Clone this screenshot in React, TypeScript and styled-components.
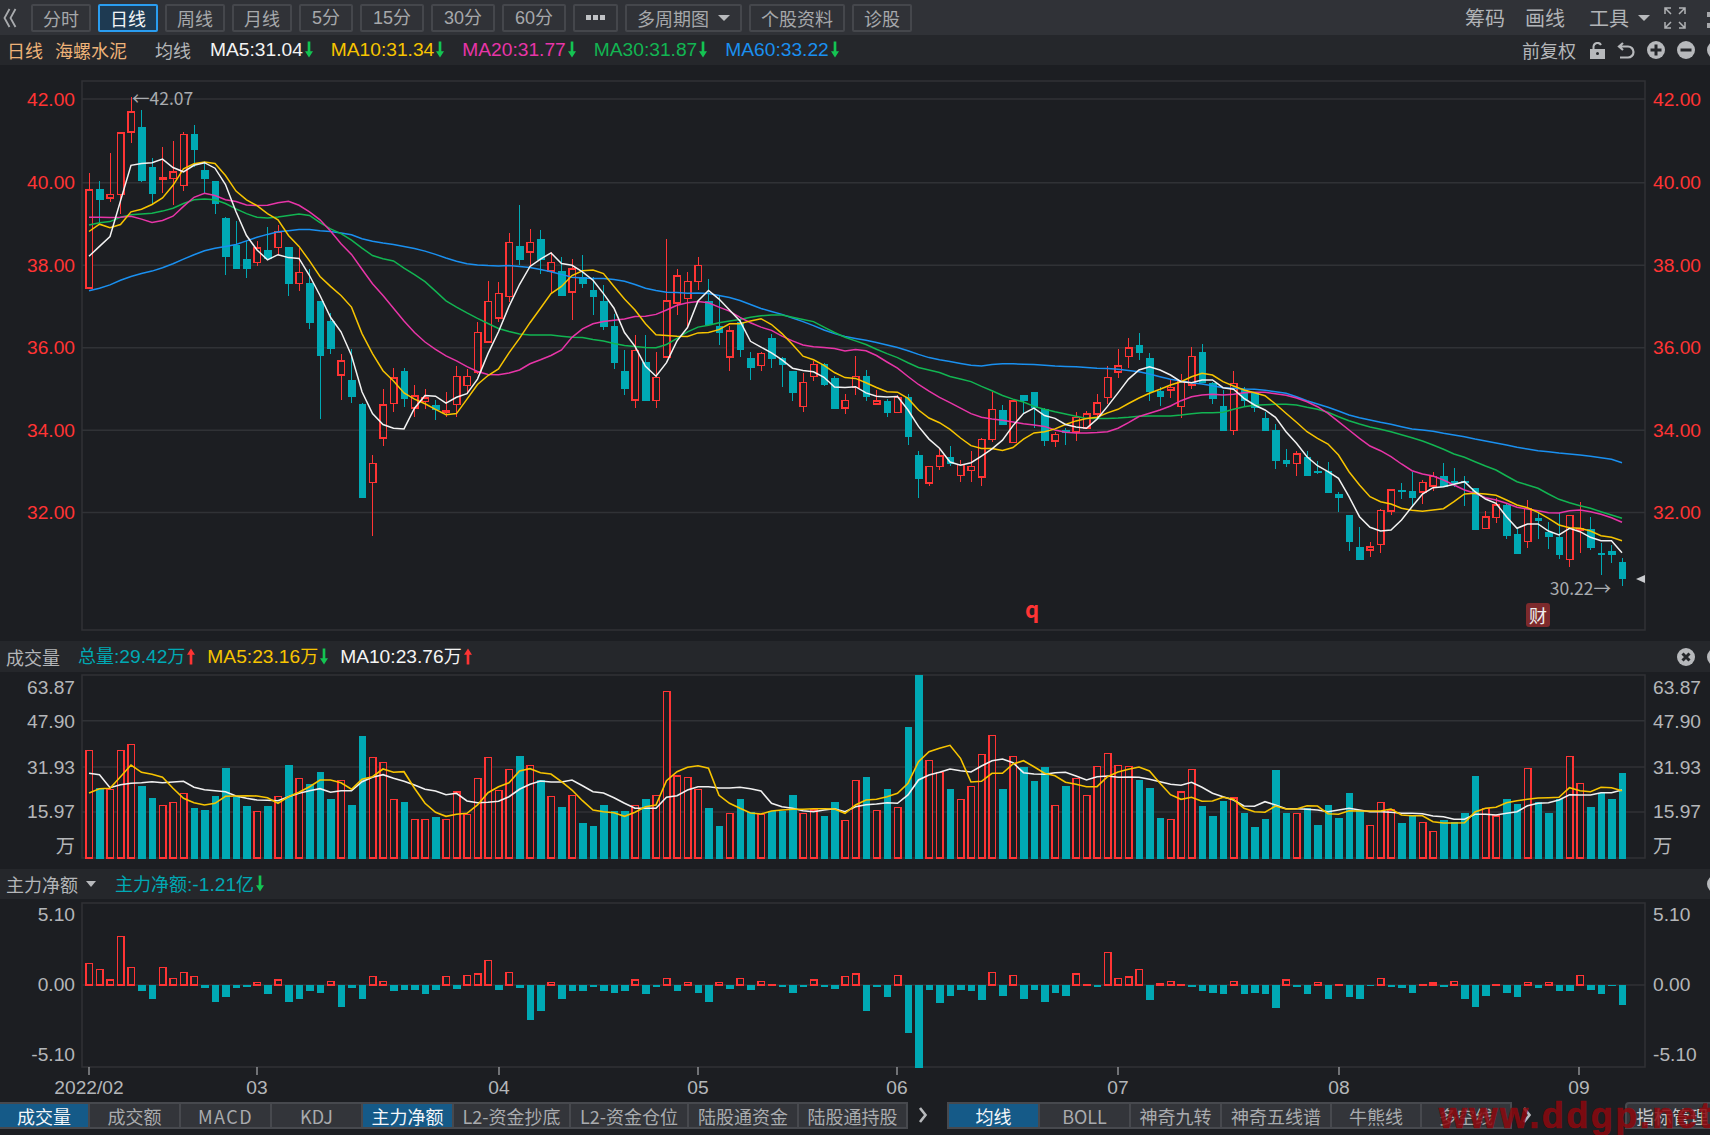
import React from "react"
import styled, { createGlobalStyle } from "styled-components"

const RED = "#ff3434"
const TEAL = "#00a9b4"
const BG = "#1c1e22"
const GRID = "#303236"
const YELLOW = "#f7c400"
const PINK = "#e835a8"
const GREEN = "#12b552"
const BLUE = "#1a90f0"
const LABEL = "#b4b6b9"
const LATIN = `"Liberation Sans", "Noto Sans CJK SC", sans-serif`

const STEP = 10.5
const xAt = (i: number) => 89 + STEP * i

// candles: kind high,top,bottom,low, read off the chart in three stretches
const CANDLES_A = `r283,330,600,600 t305,328,357,420 r227,342,352,362 r170,173,343,395 r73,116,170,200 t110,156,305,308 t243,267,341,370 r212,297,298,337 r196,281,298,370 r170,177,318,332 t152,177,220,268 t250,275,300,340 t305,305,369,395 t403,407,513,563 t415,480,546,546 t470,519,546,571 r470,490,529,538 t433,494,519,519 r425,445,488,510 t486,486,588,621 r490,557,587,608 t547,585,695,711 t634,634,786,960 t668,691,766,782 r782,800,839,907 t767,853,898,915 t915,919,1178,1178 r1060,1082,1135,1282 r878,921,1012,1033 r820,847,917,940 t820,828,906,926 r866,896,930,955 r878,902,911,932 t908,920,935,963 r886,937,940,955 r815,843,920,955 r823,843,868,890 r692,722,831,835 r580,636,748,752 r584,615,682,692 r449,475,623,637 t370,485,522,535 r437,475,500,540 t440,466,522,560 r500,530,553,615 t515,552,621,621 r519,547,611,687 t510,570,588,600 t568,605,625,675 t590,635,708,716 t672,704,807,823 t770,829,877,893 r730,771,908,930 t730,803,910,910 r775,846,909,930 r465,635,789,789 r548,566,641,675 r556,582,628,710 r515,537,582,605 t576,635,701,703 t622,705,723,757 r705,718,789,827 t680,692,769,790 t775,792,819,852 r776,780,813,827 t725,738,795,820 t790,792,811,873 t827,828,889,910 r832,859,925,940 r800,810,843,856 t807,808,865,868 t842,846,931,931 r890,909,930,947 r787,843,873,895 t824,841,898,910 r880,910,918,922 t906,911,943,955 r895,900,942,942 t890,898,1008,1030 t1047,1060,1125,1178 r1088,1090,1136,1145 r1040,1061,1090,1100 t1035,1063,1084,1090 r1072,1085,1115,1132 r1047,1090,1102,1132 r1012,1016,1119,1145 r885,933,1016,1024 t920,936,976,976 r908,910,1024,1024 t895,895,911,945 t886,886,930,985 t930,933,1021,1033 r995,1003,1020,1038 t985,990,997,1032 r940,955,995,1020 r937,946,985,985 r890,916,946,955 r815,846,900,918 r767,814,830,848 r737,764,788,820`
const CANDLES_B = `t8,45,70,90 t70,83,185,212 t170,183,200,228 r150,173,180,205 r133,155,230,263 r52,80,165,176 t43,65,158,160 t155,160,208,222 t180,227,302,302 r124,160,302,316 t172,180,212,228 t185,190,235,245 t245,263,302,302 t282,300,392,416 t357,390,401,410 r362,372,401,437 t362,380,437,437 t393,424,428,432 t397,422,488,490 t485,492,505,545 t555,555,635,662 t592,650,689,689 r636,651,660,680 r538,542,643,670 r476,480,543,555 t460,479,486,506 t425,484,505,530 r450,458,486,523 r425,440,468,483 t398,438,470,470 t415,452,462,470 t438,452,458,528 t475,475,599,599 r542,561,595,595 r505,525,562,578 t520,525,618,626 t596,613,671,671 r510,535,634,653 t545,565,572,627 t577,605,622,658 t550,622,676,688 r555,557,688,712 r515,595,600,670 t560,596,653,660 t640,668,676,735 t645,664,676,698 t685,695,748,767`

const parseCandles = (raw: string, toY: (v: number) => number) =>
  raw.split(" ").map((item) => {
    const [high, top, bottom, low] = item.slice(1).split(",").map((v) => toY(Number(v)))
    return { up: item[0] === "r", high, top, bottom, low }
  })

const fromWide = (v: number) => 70 + v / 2.75
const fromTall = (v: number) => 330 + v / 3

const candles = [...parseCandles(CANDLES_A, fromWide), ...parseCandles(CANDLES_B, fromTall)]

const maLine = (a: number[], b: number[], c: number[]) =>
  [...a.map(fromWide), ...b.map(fromWide), ...c.map(fromTall)]
    .map((y, i) => `${xAt(i)},${y.toFixed(1)}`)
    .join(" ")

const MA_LINES = [
  {
    color: BLUE,
    points: maLine(
      [607,600,591,578,568,560,553,544,533,520,508,497,490,485,480,470,460,452,445,442,439,439,442,444,448,453,464,471,476,480,485,491,498,507,517,526,533,536,538,539,538,540,543,549,555,562,570],
      [572,573,573,576,581,590,600,606,611,612,614,613,615,620,626,634,645,656,664,672,682,692,703,715,725,733,738,743,749,756,763,772,782,791,797,802,807,812,814,810,808,808,809,810,812,814,815,816,818,820,821,823,826,830],
      [132,140,148,153,158,162,167,173,175,177,178,181,185,190,200,212,222,232,243,255,263,270,277,283,290,297,300,304,310,315,320,327,333,339,345,352,357,362,365,369,372,375,379,383,388,398],
    ),
  },
  {
    color: GREEN,
    points: maLine(
      [426,420,417,405,398,396,394,388,380,367,357,355,357,367,382,395,405,407,404,400,396,400,420,437,450,468,490,510,519,525,545,563,582,608,635,652,668,683,697,711,719,726,729,729,729,732,735],
      [736,741,745,752,758,760,763,764,755,738,720,707,702,695,690,686,680,676,674,674,680,686,692,707,722,735,745,755,768,780,791,805,818,825,832,843,850,857,870,882,895,905,913,925,933,940,946,952,958,958,958,957,955,952],
      [258,258,258,255,251,248,248,247,238,230,226,224,223,223,225,232,238,247,260,272,282,291,298,305,314,323,333,345,358,372,382,395,408,420,438,455,465,475,492,508,518,527,535,545,555,565],
    ),
  },
  {
    color: PINK,
    points: maLine(
      [405,405,406,405,402,410,419,414,402,375,350,339,345,357,362,371,373,372,365,361,372,390,412,443,478,507,548,588,620,655,690,722,748,768,786,800,816,829,837,838,833,825,808,797,785,770,735],
      [712,698,692,688,685,678,677,672,660,647,640,637,640,652,663,680,695,707,716,732,745,756,761,763,766,773,769,772,785,803,820,843,865,883,900,915,930,945,955,960,963,968,973,976,980,990,996,998,998,997,995,985,970,953],
      [250,240,228,212,200,195,193,195,193,188,187,187,191,196,204,215,230,250,275,300,325,348,362,380,402,422,432,438,450,465,480,490,503,510,520,532,537,542,548,549,542,540,545,553,563,577],
    ),
  },
  {
    color: YELLOW,
    points: maLine(
      [444,424,434,425,390,383,370,352,317,272,258,253,257,290,333,357,373,395,412,455,485,525,568,595,620,652,725,780,827,855,888,905,918,933,948,945,905,865,840,822,778,738,695,655,615,595,565],
      [552,550,560,595,630,660,698,728,730,732,733,723,722,714,698,698,690,684,700,725,755,787,797,812,832,846,848,860,873,885,886,903,935,957,970,988,1012,1033,1041,1041,1046,1038,1015,998,995,987,975,965,958,955,943,933,917,902],
      [190,178,165,155,140,130,135,155,168,180,188,197,222,250,277,305,325,342,375,425,465,500,515,522,535,541,544,540,536,515,492,490,492,496,510,525,533,547,565,585,593,595,603,617,622,632],
    ),
  },
  {
    color: "#f2f2f2",
    points: maLine(
      [512,485,458,360,262,257,255,245,268,280,262,255,270,315,390,455,495,522,508,516,518,565,620,680,720,785,885,945,975,985,987,930,895,897,916,900,890,850,780,720,650,590,540,520,503,532,537],
      [555,578,615,655,722,760,815,842,805,745,708,635,606,630,660,690,746,762,778,797,820,826,830,845,872,873,871,888,897,899,898,935,980,1015,1040,1078,1087,1080,1062,1042,1018,978,945,930,950,958,975,982,985,960,925,888,850,825],
      [110,120,135,155,158,150,150,173,178,205,225,240,262,305,340,380,407,425,445,500,560,592,603,600,570,530,492,473,470,463,455,485,507,520,560,595,582,582,603,615,595,605,622,632,632,668],
    ),
  },
]

const VOLUME = `r331 t443 r448 r331 r313 t438 t474 r497 r488 r461 t505 t510 t469 t384 t470 t497 r515 t497 r470 t375 r415 t433 t397 t478 r421 t496 t289 r352 r367 r479 t487 r538 r538 t532 r538 r456 r524 r416 r353 r452 r389 t348 r376 t420 r470 t501 r466 t550 t559 t496 t514 t514 r497 t478 r466 r155 r408 r412 r448 t505 t559 r520 t478 t517 r524 t514 t514 t465 r520 r510 t528 t487 r542 r421 t411 r511 t447 r502 t262 t105 r362 r398 t447 r479 r439 r344 r286 t447 r349 t380 t424 t380 r497 t438 r416 r466 r380 r340 r376 r380 t420 t443 t533 r538 r456 r389 t497 t528 t483 r474 t519 t560 t537 t389 t519 r520 t505 t555 t496 t533 t460 t510 r556 r488 r510 t550 t528 r547 r574 t541 t546 t519 t407 r506 r528 t478 t492 r385 t487 t519 t478 r349 r430 t501 t460 t478 t398`
  .split(" ")
  .map((v) => ({ up: v[0] === "r", top: 640 + Number(v.slice(1)) / 3 }))

const volLine = (ys: number[]) => ys.map((y, i) => `${xAt(i)},${(640 + y / 3).toFixed(1)}`).join(" ")

const VOL_MA5 = volLine([459,446,445,410,375,397,403,412,445,475,488,495,490,469,468,467,468,473,490,470,457,440,420,420,428,448,418,410,387,397,395,445,490,517,529,523,520,495,458,440,428,393,386,398,402,425,450,482,510,515,518,529,517,500,495,422,395,382,377,385,466,490,505,519,522,513,510,508,508,506,506,507,520,495,480,478,470,460,430,365,335,325,316,355,426,424,400,400,372,362,380,400,407,427,433,440,440,410,396,388,381,393,430,464,478,472,484,483,472,478,505,515,517,498,507,507,497,498,521,523,512,513,513,513,507,525,527,527,545,549,549,548,516,505,502,488,482,478,474,473,472,443,452,455,442,443,452])
const VOL_MA10 = volLine([400,404,443,434,430,428,425,428,426,424,442,449,452,455,468,475,480,481,482,470,460,452,446,457,452,452,425,412,404,415,424,435,448,453,464,460,483,488,487,484,470,448,433,423,426,426,420,437,455,459,473,490,505,505,505,472,467,450,440,440,444,444,442,446,453,490,500,505,512,515,510,506,515,500,494,492,488,490,465,420,405,397,387,392,396,378,362,357,368,398,402,403,398,397,408,420,410,408,412,411,412,418,425,433,436,427,442,460,470,480,498,499,485,495,506,506,508,510,515,510,505,510,515,515,517,520,520,521,528,530,538,538,523,523,525,520,515,497,490,488,480,464,465,465,458,458,450])

const NET = `r250 r268 r300 r170 r263 t333 t356 r263 r295 r278 r290 t325 t365 t352 t325 t320 r308 t343 r300 t365 t356 t334 t338 r304 t380 t325 t356 r290 r304 t334 t329 t329 t343 t329 r290 t326 r286 r282 r242 t329 r278 t325 t419 t393 r308 t356 t334 t334 t320 t334 t338 t334 r300 t343 t320 r295 t334 r308 t338 t365 r308 t326 r296 t329 r304 r313 t320 t338 t320 r300 t320 t326 r290 r282 t393 t320 t352 r287 t460 t563 t329 t370 t347 t329 t333 t361 r277 t347 r287 t356 t329 t365 t338 t347 r282 r313 t320 r218 r295 r291 r268 t361 r310 r304 r313 t320 t334 t338 t343 r304 t343 t338 t343 t383 r300 t320 t343 r308 t356 r313 t352 t356 t317 r296 t322 t325 t338 r313 r309 t320 r304 t356 t380 t347 r313 t338 t352 r308 t325 r308 t334 t334 r287 t329 t343 t317 t374`
  .split(" ")
  .map((v) => ({ up: v[0] === "r", edge: 880 + Number(v.slice(1)) / 3 }))

const PRICE_TICKS = [
  { label: "42.00", y: 99 },
  { label: "40.00", y: 182.7 },
  { label: "38.00", y: 265.3 },
  { label: "36.00", y: 347.7 },
  { label: "34.00", y: 430.2 },
  { label: "32.00", y: 512.6 },
]
const VOL_TICKS = [
  { label: "63.87", y: 687 },
  { label: "47.90", y: 721 },
  { label: "31.93", y: 767 },
  { label: "15.97", y: 811.5 },
  { label: "万", y: 846 },
]
const NET_TICKS = [
  { label: "5.10", y: 914 },
  { label: "0.00", y: 984.5 },
  { label: "-5.10", y: 1054.5 },
]
const MONTHS = [
  { label: "2022/02", x: 89 },
  { label: "03", x: 257 },
  { label: "04", x: 499 },
  { label: "05", x: 698 },
  { label: "06", x: 897 },
  { label: "07", x: 1118 },
  { label: "08", x: 1339 },
  { label: "09", x: 1579 },
]

const PERIODS = ["分时", "日线", "周线", "月线", "5分", "15分", "30分", "60分"]
const LOWER_TABS = [
  { label: "成交量", w: 90, active: true },
  { label: "成交额", w: 91 },
  { label: "MACD", w: 91, wide: true },
  { label: "KDJ", w: 91 },
  { label: "主力净额", w: 91, active: true },
  { label: "L2-资金抄底", w: 117 },
  { label: "L2-资金仓位", w: 118 },
  { label: "陆股通资金", w: 110 },
  { label: "陆股通持股", w: 107 },
]
const OVERLAY_TABS = [
  { label: "均线", w: 91, active: true },
  { label: "BOLL", w: 91 },
  { label: "神奇九转", w: 91 },
  { label: "神奇五线谱", w: 110 },
  { label: "牛熊线", w: 90 },
  { label: "多空线", w: 88 },
]
const MA_LEGEND = [
  { label: "MA5:31.04", color: "#f4f4f4" },
  { label: "MA10:31.34", color: YELLOW },
  { label: "MA20:31.77", color: PINK },
  { label: "MA30:31.87", color: GREEN },
  { label: "MA60:33.22", color: BLUE },
]

const Trend = ({ up }: { up?: boolean }) => (
  <TrendSvg viewBox="0 0 9 18">
    {up ? <path d="M4.5 0 L9 7 H6 V18 H3 V7 H0 Z" fill={RED} /> : <path d="M4.5 18 L9 11 H6 V0 H3 V11 H0 Z" fill="#14c452" />}
  </TrendSvg>
)

const RoundIcon = ({ minus, cross }: { minus?: boolean; cross?: boolean }) => (
  <IconSvg width="18" height="18" viewBox="0 0 18 18">
    <circle cx="9" cy="9" r="9" fill="#b7b9bc" />
    {cross ? (
      <path d="M5.5 5.5 L12.5 12.5 M12.5 5.5 L5.5 12.5" stroke="#25272b" strokeWidth="3" />
    ) : (
      <path d={minus ? "M3.5 9 H14.5" : "M3.5 9 H14.5 M9 3.5 V14.5"} stroke="#25272b" strokeWidth="3" />
    )}
  </IconSvg>
)

const Candles = () => (
  <g shapeRendering="crispEdges">
    {candles.map((c, i) => {
      const x = xAt(i)
      const color = c.up ? RED : TEAL
      return (
        <g key={i}>
          <line x1={x} x2={x} y1={c.high} y2={c.low} stroke={color} strokeWidth="1" />
          {c.up ? (
            <rect x={x - 3} y={c.top} width="6.5" height={Math.max(c.bottom - c.top, 1)} fill={BG} stroke={color} strokeWidth="1.5" />
          ) : (
            <rect x={x - 3.5} y={c.top} width="7.5" height={Math.max(c.bottom - c.top, 1)} fill={color} />
          )}
        </g>
      )
    })}
  </g>
)

const AxisLabels = ({ ticks, color }: { ticks: { label: string; y: number }[]; color: string }) => (
  <>
    {ticks.map((t) => (
      <React.Fragment key={t.label}>
        <AxisText x="75" y={t.y} textAnchor="end" dominantBaseline="central" fill={color}>
          {t.label}
        </AxisText>
        <AxisText x="1653" y={t.y} dominantBaseline="central" fill={color}>
          {t.label}
        </AxisText>
      </React.Fragment>
    ))}
  </>
)

const PriceChart = () => (
  <ChartSvg width="1710" height="576" viewBox="0 65 1710 576">
    <rect x="82" y="81" width="1563" height="549" fill="none" stroke={GRID} strokeWidth="1.5" />
    {PRICE_TICKS.map((t) => (
      <line key={t.y} x1="82" x2="1645" y1={t.y} y2={t.y} stroke={GRID} strokeWidth="1.5" />
    ))}
    <AxisLabels ticks={PRICE_TICKS} color={RED} />
    <Candles />
    {MA_LINES.map((m) => (
      <polyline key={m.color} points={m.points} fill="none" stroke={m.color} strokeWidth="1.5" />
    ))}
    <MarkText x="132" y="97" dominantBaseline="central">←42.07</MarkText>
    <MarkText x="1611" y="587" textAnchor="end" dominantBaseline="central">30.22→</MarkText>
    <path d="M1636 579 L1645 575 V583 Z" fill="#c9cbce" />
    <EventMark x="1032" y="608" textAnchor="middle" dominantBaseline="central">q</EventMark>
    <rect x="1526" y="603" width="24" height="24" rx="3" fill="#7d2a2c" />
    <BadgeText x="1538" y="615" textAnchor="middle" dominantBaseline="central">财</BadgeText>
  </ChartSvg>
)

const VolumeChart = () => (
  <ChartSvg width="1710" height="197" viewBox="0 672 1710 197">
    <rect x="82" y="675" width="1563" height="183" fill="none" stroke={GRID} strokeWidth="1.5" />
    {[720.7, 767, 812].map((y) => (
      <line key={y} x1="82" x2="1645" y1={y} y2={y} stroke={GRID} strokeWidth="1.5" />
    ))}
    <AxisLabels ticks={VOL_TICKS} color={LABEL} />
    <g shapeRendering="crispEdges">
      {VOLUME.map((v, i) =>
        v.up ? (
          <rect key={i} x={xAt(i) - 3} y={v.top} width="6.5" height={858 - v.top} fill={BG} stroke={RED} strokeWidth="1.5" />
        ) : (
          <rect key={i} x={xAt(i) - 3.5} y={v.top} width="7.5" height={858.5 - v.top} fill={TEAL} />
        ),
      )}
    </g>
    <polyline points={VOL_MA10} fill="none" stroke="#f0f0f0" strokeWidth="1.6" />
    <polyline points={VOL_MA5} fill="none" stroke={YELLOW} strokeWidth="1.6" />
  </ChartSvg>
)

const NetChart = () => (
  <ChartSvg width="1710" height="203" viewBox="0 899 1710 203">
    <rect x="82" y="903" width="1563" height="164" fill="none" stroke={GRID} strokeWidth="1.5" />
    <line x1="82" x2="1645" y1="985" y2="985" stroke={GRID} strokeWidth="1.5" />
    <AxisLabels ticks={NET_TICKS} color={LABEL} />
    <g shapeRendering="crispEdges">
      {NET.map((n, i) =>
        n.up ? (
          <rect key={i} x={xAt(i) - 3} y={n.edge} width="6.5" height={985 - n.edge} fill={BG} stroke={RED} strokeWidth="1.5" />
        ) : (
          <rect key={i} x={xAt(i) - 3.5} y="985" width="7.5" height={n.edge - 985} fill={TEAL} />
        ),
      )}
    </g>
    {MONTHS.map((m) => (
      <g key={m.label}>
        <line x1={m.x} x2={m.x} y1="1067" y2="1075" stroke="#c4c6c9" strokeWidth="1" />
        <AxisText x={m.x} y="1087" textAnchor="middle" dominantBaseline="central" fill={LABEL}>
          {m.label}
        </AxisText>
      </g>
    ))}
  </ChartSvg>
)

export default function App() {
  return (
    <>
      <GlobalStyle />
      <Page>
        <Toolbar>
          <BackIcon viewBox="0 0 14 20" width="14" height="20">
            <path d="M6.5 1 L1.5 10 L6.5 19 M12.5 1 L7.5 10 L12.5 19" fill="none" stroke="#a9abae" strokeWidth="1.8" />
          </BackIcon>
          {PERIODS.map((p) => (
            <ToolButton key={p} $active={p === "日线"} $numeric={/\d/.test(p)}>
              {p}
            </ToolButton>
          ))}
          <ToolButton $numeric>
            <DotRow>
              <i />
              <i />
              <i />
            </DotRow>
          </ToolButton>
          <ToolButton>
            多周期图
            <Caret />
          </ToolButton>
          <ToolButton>个股资料</ToolButton>
          <ToolButton>诊股</ToolButton>
          <ToolRight>
            <ToolLink>筹码</ToolLink>
            <ToolLink>画线</ToolLink>
            <ToolLink $gap={24}>工具</ToolLink>
            <Caret />
            <ExpandIcon viewBox="0 0 22 22" width="22" height="22">
              <path
                d="M1 7 V1 H7 M1 1 L7 7 M15 1 H21 V7 M21 1 L15 7 M1 15 V21 H7 M1 21 L7 15 M21 15 V21 H15 M21 21 L15 15"
                fill="none"
                stroke="#b0b2b5"
                strokeWidth="1.5"
              />
            </ExpandIcon>
            <EdgeSlice $top={5}>
              <DotColumn>
                <i />
                <i />
              </DotColumn>
            </EdgeSlice>
          </ToolRight>
        </Toolbar>

        <InfoBar>
          <Ticker>日线</Ticker>
          <Ticker $gap={12}>海螺水泥</Ticker>
          <PaneText $gap={28}>均线</PaneText>
          <LegendRow>
            {MA_LEGEND.map((m) => (
              <LegendItem key={m.label}>
                <LegendText $color={m.color}>{m.label}</LegendText>
                <Trend />
              </LegendItem>
            ))}
          </LegendRow>
          <InfoRight>
            <PaneText>前复权</PaneText>
            <LockIcon width="15" height="17" viewBox="0 0 15 17">
              <path d="M3.5 7 V4.5 A4 4 0 0 1 11 3" fill="none" stroke="#b7b9bc" strokeWidth="2" />
              <path d="M0 7 H15 V17 H0 Z M7.5 10 a1.5 1.5 0 0 0 0 3 a1.5 1.5 0 0 0 0 -3 Z" fill="#b7b9bc" fillRule="evenodd" />
            </LockIcon>
            <IconSvg width="18" height="17" viewBox="0 0 18 17">
              <path d="M2 4.5 H11 A5.5 5.5 0 0 1 11 15.5 H3 M6 1 L2 4.5 L6 8" fill="none" stroke="#b7b9bc" strokeWidth="2.2" />
            </IconSvg>
            <RoundIcon />
            <RoundIcon minus />
            <EdgeSlice>
              <RoundIcon />
            </EdgeSlice>
          </InfoRight>
        </InfoBar>

        <PriceChart />

        <PaneHeader $height={31}>
          <PaneText>成交量</PaneText>
          <LegendItem $gap={18}>
            <LegendText $color={TEAL}>
              <Han>总量</Han>:29.42<Han>万</Han>
            </LegendText>
            <Trend up />
          </LegendItem>
          <LegendItem $gap={12}>
            <LegendText $color={YELLOW}>
              MA5:23.16<Han>万</Han>
            </LegendText>
            <Trend />
          </LegendItem>
          <LegendItem $gap={12}>
            <LegendText $color="#f4f4f4">
              MA10:23.76<Han>万</Han>
            </LegendText>
            <Trend up />
          </LegendItem>
          <HeaderRight>
            <RoundIcon cross />
            <EdgeSlice>
              <RoundIcon />
            </EdgeSlice>
          </HeaderRight>
        </PaneHeader>

        <VolumeChart />

        <PaneHeader $height={30}>
          <PaneText>主力净额</PaneText>
          <SmallCaret />
          <LegendItem $gap={19}>
            <LegendText $color={TEAL}>
              <Han>主力净额</Han>:-1.21<Han>亿</Han>
            </LegendText>
            <Trend />
          </LegendItem>
          <HeaderRight>
            <EdgeSlice>
              <RoundIcon />
            </EdgeSlice>
          </HeaderRight>
        </PaneHeader>

        <NetChart />

        <TabRow>
          <TabGroup>
            {LOWER_TABS.map((t) => (
              <Tab key={t.label} $w={t.w} $active={t.active} $wide={t.wide}>
                {t.label}
              </Tab>
            ))}
          </TabGroup>
          <Chevron viewBox="0 0 10 18" width="10" height="18">
            <path d="M2 2 L7.5 9 L2 16" fill="none" stroke="#b7b9bc" strokeWidth="2.6" />
          </Chevron>
          <TabGroup $gap={19}>
            {OVERLAY_TABS.map((t) => (
              <Tab key={t.label} $w={t.w} $active={t.active}>
                {t.label}
              </Tab>
            ))}
          </TabGroup>
          <Chevron viewBox="0 0 10 18" width="10" height="18">
            <path d="M2 2 L7.5 9 L2 16" fill="none" stroke="#b7b9bc" strokeWidth="2.6" />
          </Chevron>
          <ManageButton>指标管理</ManageButton>
        </TabRow>

        <Watermark>www.ddgp.net</Watermark>
      </Page>
    </>
  )
}

const GlobalStyle = createGlobalStyle`
  html, body {
    margin: 0;
    padding: 0;
    background: ${BG};
  }
`

const Page = styled.div`
  position: relative;
  width: 1710px;
  height: 1135px;
  overflow: hidden;
  display: flex;
  flex-direction: column;
  background: ${BG};
  color: ${LABEL};
  font-family: "Noto Sans CJK SC", "Liberation Sans", sans-serif;
  font-size: 18px;
  line-height: 1;
`

const Toolbar = styled.div`
  flex: none;
  height: 35px;
  display: flex;
  align-items: center;
  gap: 7px;
  padding-left: 3px;
  background: #303237;
  box-sizing: border-box;
`

const BackIcon = styled.svg`
  flex: none;
  margin-right: 7px;
`

const ToolButton = styled.div<{ $active?: boolean; $numeric?: boolean }>`
  height: 28px;
  box-sizing: border-box;
  padding: 0 ${(p) => (p.$numeric ? 11 : 10)}px;
  display: flex;
  align-items: center;
  white-space: nowrap;
  font-family: ${(p) => (p.$numeric ? LATIN : "inherit")};
  border: 2px solid ${(p) => (p.$active ? "#2a9df0" : "#45474c")};
  border-radius: 2px;
  background: ${(p) => (p.$active ? "#1e3a52" : "transparent")};
  color: ${(p) => (p.$active ? "#f2f4f6" : "#a6a8ab")};
`

const DotRow = styled.span`
  display: flex;
  gap: 2px;
  i {
    width: 5px;
    height: 5px;
    background: #c0c2c5;
  }
`

const Caret = styled.span`
  flex: none;
  width: 0;
  height: 0;
  margin-left: 9px;
  border-left: 6px solid transparent;
  border-right: 6px solid transparent;
  border-top: 6px solid #b7b9bc;
`

const SmallCaret = styled(Caret)`
  margin-left: 8px;
  border-left-width: 5px;
  border-right-width: 5px;
`

const ToolRight = styled.div`
  margin-left: auto;
  display: flex;
  align-items: center;
`

const ToolLink = styled.span<{ $gap?: number }>`
  font-size: 20px;
  margin-left: ${(p) => p.$gap ?? 20}px;
  color: #b2b4b7;
`

const ExpandIcon = styled.svg`
  flex: none;
  margin: 0 21px 0 14px;
`

const EdgeSlice = styled.span<{ $top?: number }>`
  flex: none;
  display: block;
  width: 3px;
  overflow: hidden;
  margin-top: ${(p) => p.$top ?? 0}px;
`

const DotColumn = styled.span`
  display: flex;
  flex-direction: column;
  gap: 6px;
  i {
    width: 3px;
    height: 5px;
    background: #a6a8ab;
  }
`

const InfoBar = styled.div`
  flex: none;
  height: 30px;
  display: flex;
  align-items: center;
  padding-left: 7px;
  background: #25272b;
`

const Ticker = styled.span<{ $gap?: number }>`
  color: #eeb278;
  margin-left: ${(p) => p.$gap ?? 0}px;
`

const PaneText = styled.span<{ $gap?: number }>`
  color: ${LABEL};
  margin-left: ${(p) => p.$gap ?? 0}px;
  white-space: nowrap;
`

const LegendRow = styled.div`
  display: flex;
  align-items: center;
  gap: 18px;
  margin-left: 19px;
`

const LegendItem = styled.div<{ $gap?: number }>`
  display: flex;
  align-items: center;
  gap: 2px;
  margin-left: ${(p) => p.$gap ?? 0}px;
`

const LegendText = styled.span<{ $color: string }>`
  color: ${(p) => p.$color};
  white-space: nowrap;
  font-family: ${LATIN};
  font-size: 19.2px;
`

const Han = styled.span`
  font-family: "Noto Sans CJK SC", sans-serif;
  font-size: 18px;
`

const TrendSvg = styled.svg`
  flex: none;
  width: 8px;
  height: 17px;
`

const IconSvg = styled.svg`
  flex: none;
  display: block;
`

const LockIcon = styled(IconSvg)`
  margin-left: 2px;
`

const InfoRight = styled.div`
  margin-left: auto;
  display: flex;
  align-items: center;
  gap: 12px;
`

const ChartSvg = styled.svg`
  flex: none;
  display: block;
`

const AxisText = styled.text`
  font-family: ${LATIN};
  font-size: 19.2px;
`

const MarkText = styled.text`
  font-size: 17.5px;
  fill: #a9acb0;
`

const EventMark = styled.text`
  font-size: 22px;
  font-weight: 700;
  fill: ${RED};
`

const BadgeText = styled.text`
  font-size: 18px;
  fill: #eee;
`

const PaneHeader = styled.div<{ $height: number }>`
  flex: none;
  height: ${(p) => p.$height}px;
  display: flex;
  align-items: center;
  padding-left: 6px;
  background: #25272b;
`

const HeaderRight = styled.div`
  margin-left: auto;
  display: flex;
  align-items: center;
  gap: 12px;
`

const TabRow = styled.div`
  flex: none;
  height: 33px;
  display: flex;
  align-items: flex-start;
`

const TabGroup = styled.div<{ $gap?: number }>`
  flex: none;
  display: flex;
  margin-left: ${(p) => p.$gap ?? 0}px;
  border: 2px solid #47494e;
  border-left-width: ${(p) => (p.$gap ? 2 : 0)}px;
  background: #33353a;
  box-sizing: border-box;
  height: 27px;
`

const Tab = styled.div<{ $w: number; $active?: boolean; $wide?: boolean }>`
  flex: none;
  width: ${(p) => p.$w}px;
  box-sizing: border-box;
  display: flex;
  align-items: center;
  justify-content: center;
  white-space: nowrap;
  letter-spacing: ${(p) => (p.$wide ? 1.5 : 0)}px;
  border-right: 2px solid #47494e;
  background: ${(p) => (p.$active ? "#155a88" : "transparent")};
  color: ${(p) => (p.$active ? "#f4f6f8" : "#a9abae")};
  &:last-child {
    border-right: none;
  }
`

const Chevron = styled.svg`
  flex: none;
  margin: 4px 0 0 10px;
`

const ManageButton = styled.div`
  flex: none;
  width: 110px;
  height: 27px;
  margin-left: 93px;
  box-sizing: border-box;
  padding-left: 9px;
  display: flex;
  align-items: center;
  white-space: nowrap;
  border: 2px solid #47494e;
  border-radius: 4px 0 0 0;
  background: #33353a;
  color: #c6c8cb;
`

const Watermark = styled.div`
  position: absolute;
  left: 1439px;
  top: 1094px;
  font-family: "Liberation Sans", sans-serif;
  font-size: 36px;
  font-weight: 700;
  line-height: 44px;
  letter-spacing: 2.5px;
  white-space: nowrap;
  color: rgba(140, 8, 14, 0.85);
  -webkit-text-stroke: 0.7px rgba(140, 8, 14, 0.85);
  pointer-events: none;
`
